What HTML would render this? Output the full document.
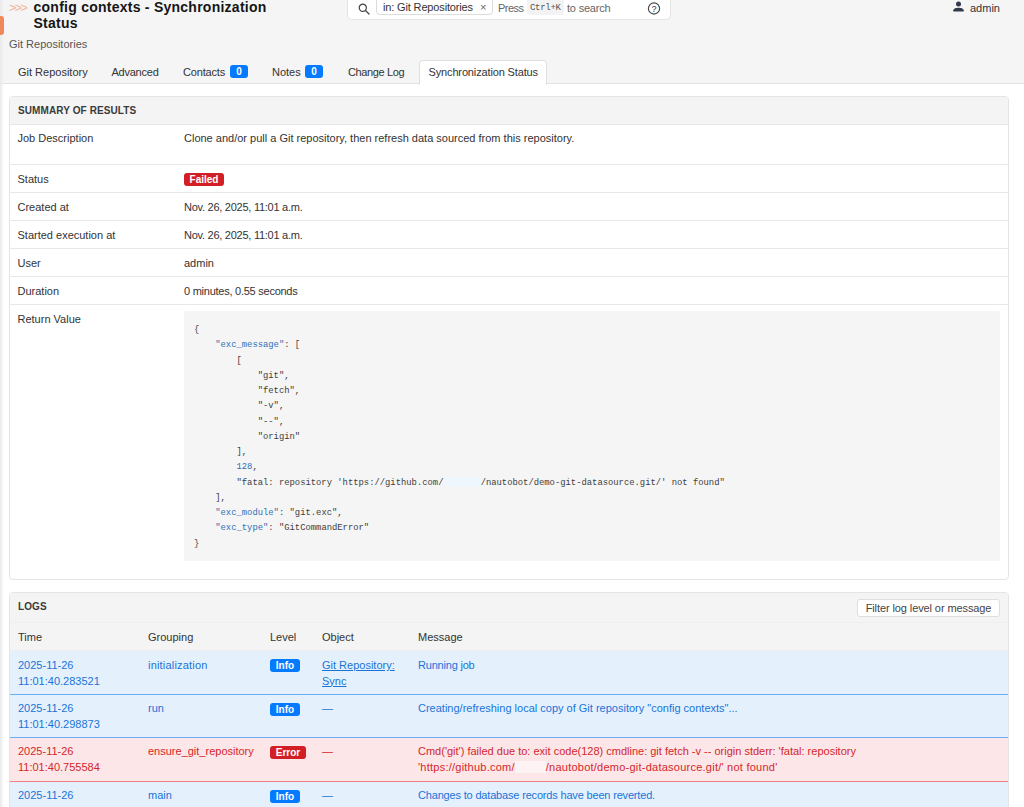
<!DOCTYPE html>
<html lang="en">
<head>
<meta charset="utf-8">
<title>config contexts - Synchronization Status</title>
<style>
*{box-sizing:border-box;margin:0;padding:0}
html,body{width:1024px;height:807px;overflow:hidden}
body{position:relative;background:#fff;font-family:"Liberation Sans",sans-serif;font-size:11px;color:#333;}
.abs{position:absolute;white-space:nowrap}
#topbg{position:absolute;left:0;top:0;width:1024px;height:84px;background:#f5f5f5;border-bottom:1px solid #e2e2e2}
#gutter{position:absolute;left:0;top:0;width:4px;height:807px;background:linear-gradient(to right,#e9e9e9,rgba(240,240,240,0))}
#orange{position:absolute;left:0;top:16px;width:4px;height:19px;background:#f0885a;border-radius:0 3px 3px 0}
#title{left:33.5px;top:-1.5px;font-size:14px;line-height:16px;color:#161616;font-weight:bold;letter-spacing:.25px;white-space:normal;width:260px}
#chev{left:9px;top:1px;font-size:12.5px;color:#f4b398;letter-spacing:-1.5px;line-height:14px}
#crumb{left:9px;top:37px;font-size:11px;color:#555;line-height:14px}
.tab{top:65px;font-size:11px;line-height:14px;color:#333}
.badge{position:absolute;top:65px;height:13px;width:18px;border-radius:3px;background:#047bfe;color:#fff;font-weight:bold;font-size:10px;line-height:13px;text-align:center}
#acttab{position:absolute;left:419px;top:60px;width:128px;height:25px;background:#fff;border:1px solid #e0e0e0;border-bottom:none;border-radius:4px 4px 0 0}
#search{position:absolute;left:347px;top:-6px;width:324px;height:26px;background:#fff;border:1px solid #e4e4e4;border-radius:5px}
#chip{position:absolute;left:376px;top:-3px;width:117px;height:18px;background:#fff;border:1px solid #dcdcdc;border-radius:4px}
#kbd{position:absolute;left:527px;top:-2px;width:37px;height:17px;background:#f3f3f3;border-radius:3px}
.panel{position:absolute;left:9px;width:1000px;border:1px solid #e4e4e4;border-radius:4px;background:#fff;overflow:hidden}
.phead{height:27px;background:#f4f4f4;font-weight:bold;font-size:10px;color:#3a3a3a;line-height:28px;padding-left:8px;letter-spacing:.1px;overflow:hidden}
.row{position:relative;border-top:1px solid #e8e8e8;height:28px}
.row .k{position:absolute;left:7.5px;top:6.5px;line-height:14px;color:#333;white-space:nowrap}
.row .v{position:absolute;left:174px;top:6.5px;line-height:14px;color:#333;white-space:nowrap}
.fail{position:absolute;left:174px;top:7.5px;width:40px;height:13px;border-radius:3px;background:#d21f26;color:#fff;font-weight:bold;font-size:10px;line-height:13px;text-align:center}
pre{position:absolute;left:174px;top:6px;width:816px;height:250px;background:#f5f5f5;border-radius:3px;font-family:"Liberation Mono",monospace;font-size:8.86px;line-height:15.27px;color:#3d3d3d;padding:12px 0 0 10px;white-space:pre}
pre .n{color:#2f6fb6}
pre .s{color:#333}
.red{display:inline-block;width:34.2px;margin-left:3px;height:10px;vertical-align:-2px;background:#eef7fe}
.red2{display:inline-block;width:31px;height:12px;vertical-align:-2px;background:#fdf3f4}
.lh{position:relative;height:29px;background:#f4f4f4;border-top:1px solid #efefef;border-bottom:1px solid #eee}
.lh span{position:absolute;top:7px;line-height:14px;color:#333}
.lr{position:relative;height:43px;}
.lr span,.lr a{position:absolute;top:6px;line-height:15.7px;white-space:nowrap}
.r1 span,.r1 a{top:7px}
.info{background:#e4f1fd;color:#1a73d9;border-bottom:1px solid #6baef3}
.err{background:#fde6e7;color:#d3262c;border-bottom:1px solid #ef7d82}
.lvl{position:absolute;left:260px;top:8px;height:13px;border-radius:3px;color:#fff;font-weight:bold;font-size:10px;line-height:13px;text-align:center}
.info .lvl{background:#047bfe;width:30px}
.err .lvl{background:#d21f26;width:36px}
#filter{position:absolute;left:857px;top:599px;letter-spacing:-.1px;width:143px;height:18px;border:1px solid #dedede;border-radius:3px;background:#fff;font-size:11px;line-height:16px;text-align:center;color:#444}
</style>
</head>
<body>
<div id="topbg"></div>
<div id="gutter"></div>
<div id="orange"></div>

<div class="abs" id="chev">&gt;&gt;&gt;</div>
<div class="abs" id="title">config contexts - Synchronization Status</div>
<div class="abs" id="crumb">Git Repositories</div>

<div id="search"></div>
<svg class="abs" style="left:358px;top:3px" width="12" height="12" viewBox="0 0 12 12"><circle cx="4.8" cy="4.8" r="3.6" fill="none" stroke="#444" stroke-width="1.2"/><path d="M7.5 7.5 L11 11" stroke="#444" stroke-width="1.3" stroke-linecap="round"/></svg>
<div id="chip"></div>
<div class="abs" style="left:383px;top:0px;font-size:11px;line-height:14px;color:#333;letter-spacing:-.15px">in: Git Repositories</div>
<div class="abs" style="left:480px;top:0px;font-size:11px;line-height:14px;color:#666">×</div>
<div class="abs" style="left:498px;top:1px;font-size:11px;line-height:14px;color:#666;letter-spacing:-.5px">Press</div>
<div id="kbd"></div>
<div class="abs" style="left:530px;top:1px;font-family:'Liberation Mono',monospace;font-size:9px;letter-spacing:-.3px;line-height:14px;color:#555">Ctrl+K</div>
<div class="abs" style="left:567px;top:1px;font-size:11px;line-height:14px;color:#666;letter-spacing:-.2px">to search</div>
<svg class="abs" style="left:647px;top:2px" width="14" height="14" viewBox="0 0 14 14"><circle cx="7" cy="6.5" r="5.6" fill="none" stroke="#444" stroke-width="1.1"/><text x="7" y="9.7" font-size="9" font-family="Liberation Sans, sans-serif" text-anchor="middle" fill="#333">?</text></svg>

<svg class="abs" style="left:953px;top:1px" width="11" height="11" viewBox="0 0 11 11"><circle cx="5.5" cy="3" r="2.5" fill="#333a4a"/><path d="M0.3 10.5 V9.3 C0.3 7.6 3.5 6.8 5.5 6.8 C7.5 6.8 10.7 7.6 10.7 9.3 V10.5 Z" fill="#333a4a"/></svg>
<div class="abs" style="left:970px;top:1px;font-size:11px;line-height:14px;color:#333">admin</div>

<div id="acttab"></div>
<div class="abs tab" style="left:18px">Git Repository</div>
<div class="abs tab" style="left:111.5px;letter-spacing:-.24px">Advanced</div>
<div class="abs tab" style="left:183px;letter-spacing:-.18px">Contacts</div>
<div class="badge" style="left:230px">0</div>
<div class="abs tab" style="left:272px">Notes</div>
<div class="badge" style="left:305px">0</div>
<div class="abs tab" style="left:348px;letter-spacing:-.38px">Change Log</div>
<div class="abs tab" style="left:428.5px;letter-spacing:-.14px">Synchronization Status</div>

<div class="panel" style="top:96px;height:484px">
  <div class="phead">SUMMARY OF RESULTS</div>
  <div class="row" style="height:40px"><span class="k" style="top:6px">Job Description</span><span class="v" style="top:6px">Clone and/or pull a Git repository, then refresh data sourced from this repository.</span></div>
  <div class="row"><span class="k">Status</span><span class="fail">Failed</span></div>
  <div class="row"><span class="k">Created at</span><span class="v" style="letter-spacing:-.26px">Nov. 26, 2025, 11:01 a.m.</span></div>
  <div class="row"><span class="k">Started execution at</span><span class="v" style="letter-spacing:-.26px">Nov. 26, 2025, 11:01 a.m.</span></div>
  <div class="row"><span class="k">User</span><span class="v">admin</span></div>
  <div class="row"><span class="k">Duration</span><span class="v" style="letter-spacing:-.25px">0 minutes, 0.55 seconds</span></div>
  <div class="row" style="height:276px"><span class="k">Return Value</span>
<pre>{
    <span class="n">"exc_message"</span>: [
        [
            "git",
            "fetch",
            "-v",
            "--",
            "origin"
        ],
        <span class="n">128</span>,
        "fatal: repository 'https://github.com/<span class="red"></span>/nautobot/demo-git-datasource.git/' not found"
    ],
    <span class="n">"exc_module"</span>: "git.exc",
    <span class="n">"exc_type"</span>: "GitCommandError"
}</pre>
  </div>
</div>

<div class="panel" style="top:592px;height:230px;border-radius:4px 4px 0 0">
  <div class="phead" style="height:29px;line-height:28px">LOGS</div>
  <div class="lh"><span style="left:8px">Time</span><span style="left:138px">Grouping</span><span style="left:260px">Level</span><span style="left:312px">Object</span><span style="left:408px">Message</span></div>
  <div class="lr info r1" style="height:44px"><span style="left:8px">2025-11-26<br>11:01:40.283521</span><span style="left:138px;letter-spacing:.19px">initialization</span><div class="lvl">Info</div><a style="left:312px;text-decoration:underline">Git Repository:<br>Sync</a><span style="left:408px;letter-spacing:-.2px">Running job</span></div>
  <div class="lr info"><span style="left:8px">2025-11-26<br>11:01:40.298873</span><span style="left:138px">run</span><div class="lvl">Info</div><span style="left:312px">—</span><span style="left:408px">Creating/refreshing local copy of Git repository "config contexts"...</span></div>
  <div class="lr err" style="height:44px"><span style="left:8px">2025-11-26<br>11:01:40.755584</span><span style="left:138px">ensure_git_repository</span><div class="lvl">Error</div><span style="left:312px">—</span><span style="left:408px">Cmd('git') failed due to: exit code(128) cmdline: git fetch -v -- origin stderr: 'fatal: repository<br><b style="font-weight:normal;letter-spacing:.24px">'https://github.com/<i class="red2"></i>/nautobot/demo-git-datasource.git/' not found'</b></span></div>
  <div class="lr info"><span style="left:8px">2025-11-26<br>11:01:40.756449</span><span style="left:138px">main</span><div class="lvl">Info</div><span style="left:312px">—</span><span style="left:408px;letter-spacing:-.175px">Changes to database records have been reverted.</span></div>
</div>
<div id="filter">Filter log level or message</div>
</body>
</html>
